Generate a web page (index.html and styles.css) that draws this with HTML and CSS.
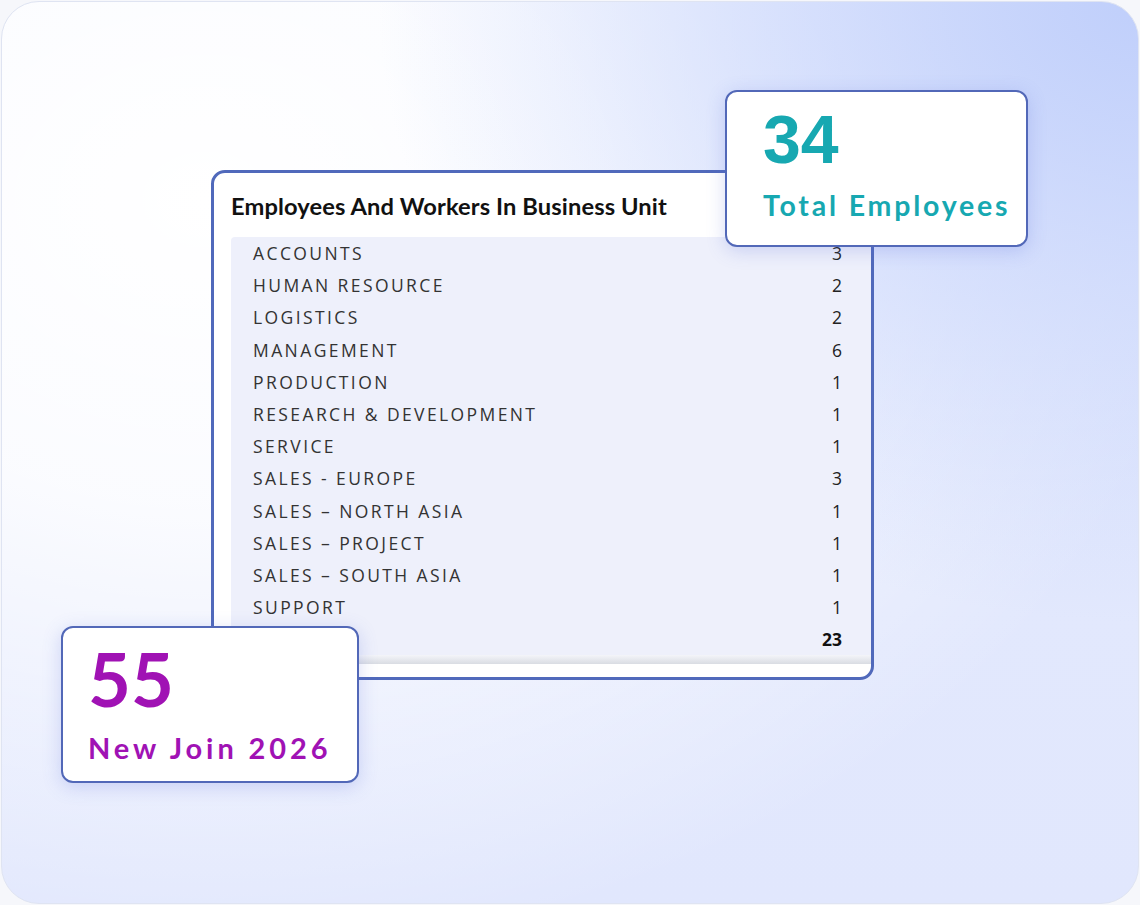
FILE: index.html
```html
<!DOCTYPE html>
<html>
<head>
<meta charset="utf-8">
<link rel="stylesheet" href="styles.css">
</head>
<body>
<div class="frame">
  <div class="card">
    <h2 class="card-title">Employees And Workers In Business Unit</h2>
    <div class="table">
      <div class="row"><span>ACCOUNTS</span><span class="num">3</span></div>
      <div class="row"><span>HUMAN RESOURCE</span><span class="num">2</span></div>
      <div class="row"><span>LOGISTICS</span><span class="num">2</span></div>
      <div class="row"><span>MANAGEMENT</span><span class="num">6</span></div>
      <div class="row"><span>PRODUCTION</span><span class="num">1</span></div>
      <div class="row"><span>RESEARCH &amp; DEVELOPMENT</span><span class="num">1</span></div>
      <div class="row"><span>SERVICE</span><span class="num">1</span></div>
      <div class="row"><span>SALES - EUROPE</span><span class="num">3</span></div>
      <div class="row"><span>SALES – NORTH ASIA</span><span class="num">1</span></div>
      <div class="row"><span>SALES – PROJECT</span><span class="num">1</span></div>
      <div class="row"><span>SALES – SOUTH ASIA</span><span class="num">1</span></div>
      <div class="row"><span>SUPPORT</span><span class="num">1</span></div>
      <div class="row total"><span></span><span class="num">23</span></div>
    </div>
    <div class="table-shade"></div>
  </div>

  <div class="stat stat-total">
    <div class="stat-value">34</div>
    <div class="stat-label">Total Employees</div>
  </div>

  <div class="stat stat-join">
    <div class="stat-value">55</div>
    <div class="stat-label">New Join 2026</div>
  </div>
</div>
</body>
</html>
```

FILE: styles.css
```css
html, body {
  margin: 0;
  padding: 0;
  background: #f6f7fb;
}

body {
  width: 1140px;
  height: 905px;
  overflow: hidden;
  font-family: "Lato", "Open Sans", sans-serif;
}

.frame {
  position: relative;
  box-sizing: border-box;
  margin: 1px;
  width: 1138px;
  height: 903px;
  border: 1px solid #dfe4f2;
  border-radius: 38px;
  overflow: hidden;
  padding: 168px 0 0 209px;
  background:
    radial-gradient(ellipse 760px 620px at 100% 0%, rgba(192, 207, 251, 1) 0%, rgba(200, 213, 252, 0.65) 45%, rgba(210, 220, 252, 0) 100%),
    radial-gradient(ellipse 1000px 760px at 18% 22%, rgba(255, 255, 255, 1) 0%, rgba(255, 255, 255, 0.85) 40%, rgba(255, 255, 255, 0) 100%),
    linear-gradient(to bottom, #e4eafd 0%, #e1e7fd 100%);
}

.card {
  box-sizing: border-box;
  width: 663px;
  height: 510px;
  background: #ffffff;
  border: 3px solid #5069bb;
  border-radius: 14px;
  padding: 19px 0 0 17px;
}

.card-title {
  margin: 0 0 16px 0;
  font-family: "Lato", sans-serif;
  font-weight: 700;
  font-size: 23.7px;
  line-height: 29px;
  color: #111111;
  letter-spacing: 0.1px;
}

.table {
  background: #eef0fb;
  border-radius: 4px 0 0 0;
}

.row {
  display: flex;
  justify-content: space-between;
  align-items: center;
  height: 32.2px;
  padding: 0 29px 0 22px;
  font-family: "Open Sans", sans-serif;
  font-size: 17.5px;
  letter-spacing: 2.4px;
  color: #333333;
}

.row .num {
  letter-spacing: 0;
  color: #222222;
}

.row.total .num {
  font-weight: 700;
  color: #111111;
}

.table-shade {
  height: 9px;
  background: linear-gradient(to bottom, #f4f5f9, #d9dce3);
}

.stat {
  position: absolute;
  box-sizing: border-box;
  background: #ffffff;
  border: 2px solid #5268b8;
  border-radius: 12px;
  box-shadow: 0 4px 18px rgba(90, 110, 220, 0.25);
}

.stat-total {
  left: 723px;
  top: 88px;
  width: 303px;
  height: 157px;
  padding: 9px 0 0 36px;
  color: #17a8b1;
}

.stat-total .stat-value {
  font-family: "Liberation Sans", Arial, sans-serif;
  font-weight: 700;
  font-size: 68px;
  line-height: 76px;
}

.stat-total .stat-value,
.stat-join .stat-value {
  letter-spacing: 0;
}

.stat-total .stat-label {
  margin-top: 11px;
  font-family: "Lato", sans-serif;
  font-weight: 700;
  font-size: 28.5px;
  line-height: 34px;
  letter-spacing: 2.8px;
}

.stat-join {
  left: 59px;
  top: 624px;
  width: 298px;
  height: 157px;
  padding: 10px 0 0 25px;
  color: #a012b4;
}

.stat-join .stat-value {
  font-family: "Lato", sans-serif;
  font-weight: 700;
  font-size: 74px;
  line-height: 82px;
}

.stat-join .stat-label {
  margin-top: 11px;
  font-family: "Lato", sans-serif;
  font-weight: 700;
  font-size: 29px;
  line-height: 34px;
  letter-spacing: 3.9px;
}
```
